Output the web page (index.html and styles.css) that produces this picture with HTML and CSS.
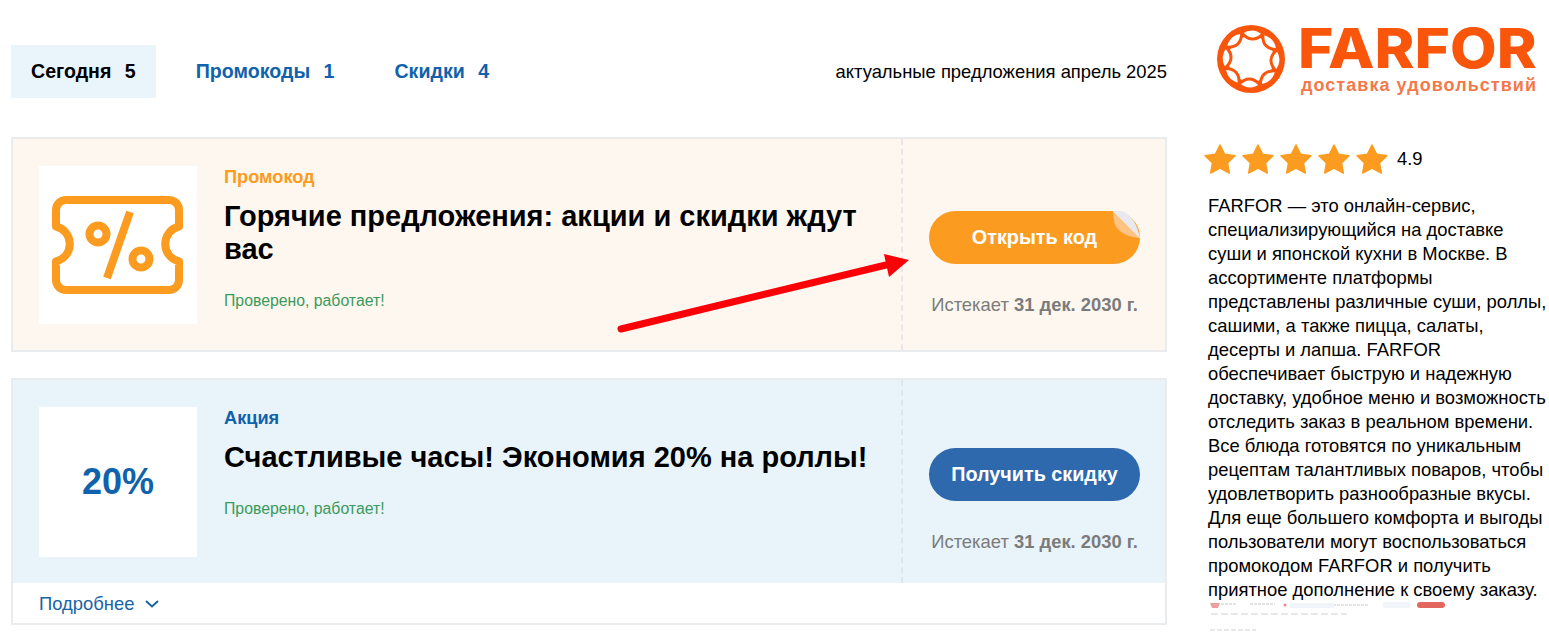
FILE: index.html
```html
<!DOCTYPE html>
<html lang="ru">
<head>
    <meta charset="UTF-8">
    <meta name="viewport" content="width=device-width, initial-scale=1.0">
    <title>Промокоды FARFOR</title>
    <link rel="stylesheet" href="styles.css">
</head>
<body>
    <div class="page">
        <main class="main">
            <!-- вкладки -->
            <nav class="tabs">
                <a class="tab active">Сегодня <span class="count">5</span></a>
                <a class="tab">Промокоды <span class="count">1</span></a>
                <a class="tab">Скидки <span class="count">4</span></a>
                <span class="tabs-note">актуальные предложения апрель 2025</span>
            </nav>

            <!-- промокод -->
            <section class="card card-promo">
                <div class="card-body">
                    <div class="thumb">
                        <svg class="ticket" viewBox="0 0 158 158" width="158" height="158">
                            <g fill="none" stroke="#fb9c21" stroke-width="8" stroke-linejoin="round">
                                <path d="M27 34H130a10 10 0 0 1 10 10V60.500A18 18 0 0 0 140 95.500V114a10 10 0 0 1-10 10H27a10 10 0 0 1-10-10V95.500A18 18 0 0 0 17 60.500V44a10 10 0 0 1 10-10z"/>
                                <path d="M91 46L68 112"/>
                                <circle cx="59" cy="68" r="8.5"/>
                                <circle cx="102" cy="93" r="8.5"/>
                            </g>
                        </svg>
                    </div>
                    <div class="info">
                        <div class="label label-orange">Промокод</div>
                        <h2 class="title">Горячие предложения: акции и скидки ждут вас</h2>
                        <div class="verified">Проверено, работает!</div>
                    </div>
                    <div class="action">
                        <a class="btn btn-orange">
                            Открыть код
                            <svg class="peel" viewBox="0 0 30 30" width="30" height="30">
                                <path d="M3 0H12Q26 6 30 27z" fill="#e7e9ef"/>
                                <path d="M3 0L30 27Q12 26 5 14Q3 6 3 0z" fill="#fcc384"/>
                                <path d="M3 0L30 27" fill="none" stroke="#fde4c6" stroke-width="1"/>
                            </svg>
                        </a>
                        <div class="expires">Истекает <b>31 дек. 2030 г.</b></div>
                    </div>
                </div>
            </section>

            <!-- акция -->
            <section class="card card-sale">
                <div class="card-body">
                    <div class="thumb thumb-sale">20%</div>
                    <div class="info">
                        <div class="label label-blue">Акция</div>
                        <h2 class="title">Счастливые часы! Экономия 20% на роллы!</h2>
                        <div class="verified">Проверено, работает!</div>
                    </div>
                    <div class="action">
                        <a class="btn btn-blue">Получить скидку</a>
                        <div class="expires">Истекает <b>31 дек. 2030 г.</b></div>
                    </div>
                </div>
                <div class="card-foot">
                    Подробнее
                    <svg viewBox="0 0 14 8" width="14" height="8"><path d="M1 1l6 5.500L13 1" fill="none" stroke="#1a64a4" stroke-width="2"/></svg>
                </div>
            </section>

            <!-- стрелка поверх карточки -->
            <svg class="arrow" viewBox="0 0 320 100" width="320" height="100">
                <path d="M21 89L286 25" stroke="#fb0007" stroke-width="7" stroke-linecap="round"/>
                <path d="M284 14L309 20L289 37z" fill="#fb0007"/>
            </svg>
        </main>

        <aside class="side">
            <div class="logo">
                <svg class="logo-ring" viewBox="0 0 72 72" width="72" height="72">
                    <defs>
                        <path id="petal" d="M25 10Q36 2 47 10Q36 22 25 10z" fill="#fff" stroke="#f9560c" stroke-width="3"/>
                    </defs>
                    <circle cx="36" cy="36" r="34" fill="#f9560c"/>
                    <circle cx="36" cy="36" r="23" fill="#fff"/>
                    <use href="#petal" transform="rotate(3 36 36)"/>
                    <use href="#petal" transform="rotate(48 36 36)"/>
                    <use href="#petal" transform="rotate(93 36 36)"/>
                    <use href="#petal" transform="rotate(138 36 36)"/>
                    <use href="#petal" transform="rotate(183 36 36)"/>
                    <use href="#petal" transform="rotate(228 36 36)"/>
                    <use href="#petal" transform="rotate(273 36 36)"/>
                    <use href="#petal" transform="rotate(318 36 36)"/>
                </svg>
                <div class="logo-text">
                    <div class="logo-name">FARFOR</div>
                    <div class="logo-sub">доставка удовольствий</div>
                </div>
            </div>
            <div class="rating">
                <svg class="star" viewBox="0 0 32 32" width="32" height="32"><path id="star" d="M16 2l4.600 9.300 10.400 1.400-7.500 7.200 1.800 10.100L16 25.200 6.700 30l1.800-10.100L1 12.700l10.400-1.400z" fill="#fb9c21" stroke="#fb9c21" stroke-width="1.500" stroke-linejoin="round"/></svg>
                <svg class="star" viewBox="0 0 32 32" width="32" height="32"><use href="#star"/></svg>
                <svg class="star" viewBox="0 0 32 32" width="32" height="32"><use href="#star"/></svg>
                <svg class="star" viewBox="0 0 32 32" width="32" height="32"><use href="#star"/></svg>
                <svg class="star" viewBox="0 0 32 32" width="32" height="32"><use href="#star"/></svg>
                <span class="rating-value">4.9</span>
            </div>
            <p class="about">FARFOR — это онлайн-сервис, специализирующийся на доставке суши и японской кухни в Москве. В ассортименте платформы представлены различные суши, роллы, сашими, а также пицца, салаты, десерты и лапша. FARFOR обеспечивает быструю и надежную доставку, удобное меню и возможность отследить заказ в реальном времени. Все блюда готовятся по уникальным рецептам талантливых поваров, чтобы удовлетворить разнообразные вкусы. Для еще большего комфорта и выгоды пользователи могут воспользоваться промокодом FARFOR и получить приятное дополнение к своему заказу.</p>
            <!-- мелкий скриншот сайта -->
            <svg class="shot" viewBox="0 0 270 32" width="270" height="32">
                <path d="M2 1h10l-2 5H4z" fill="#eba0a0"/>
                <path d="M13 2h16M42 2h25M82 2h4M125 3h35" stroke="#c9c9c9" stroke-width="1" stroke-dasharray="3 1"/>
                <circle cx="77" cy="3" r="1.500" fill="#e88"/>
                <rect x="82" y="1" width="44" height="5" fill="#f1f4f8"/>
                <rect x="175" y="0" width="27" height="6" rx="2" fill="#f1f4f8"/>
                <rect x="209" y="0" width="28" height="6" rx="3" fill="#e4675f"/>
                <path d="M3 12h136" stroke="#d2d2d2" stroke-width="1" stroke-dasharray="7 3"/>
                <path d="M2 28h46" stroke="#d2d2d2" stroke-width="1" stroke-dasharray="5 2"/>
            </svg>
        </aside>
    </div>
</body>
</html>
```

FILE: styles.css
```css
* {
    box-sizing: border-box;
    margin: 0;
    padding: 0;
}
body {
    font-family: 'Liberation Sans', Arial, sans-serif;
    color: #000;
    background-color: #fff;
    overflow: hidden;
}
.page {
    display: flex;
    align-items: flex-start;
    padding-left: 11px;
}
.main {
    position: relative;
    flex: none;
    width: 1156px;
    padding-top: 45px;
}
.tabs {
    display: flex;
    align-items: center;
    height: 53px;
    margin-bottom: 39px;
}
.tab {
    padding: 0 20px;
    margin-right: 20px;
    height: 53px;
    line-height: 53px;
    font-size: 19.6px;
    font-weight: bold;
    color: #0f62ab;
}
.tab.active {
    background-color: #e9f4fb;
    color: #000;
}
.count {
    margin-left: 8px;
}
.tabs-note {
    margin-left: auto;
    font-size: 18.4px;
}
.card {
    border: 2px solid #e9ecef;
    margin-bottom: 26px;
    background-color: #fff;
}
.card-body {
    display: flex;
}
.card-promo .card-body {
    background-color: #fef7ef;
    height: 211px;
}
.card-sale .card-body {
    background-color: #e8f3fa;
    height: 203px;
}
.thumb {
    flex: none;
    width: 158px;
    height: 158px;
    margin: 27px 0 0 26px;
    background-color: #fff;
}
.ticket {
    display: block;
}
.thumb-sale {
    height: 150px;
    line-height: 150px;
    text-align: center;
    font-size: 36px;
    font-weight: bold;
    color: #0f62ab;
}
.info {
    flex: 1;
    padding: 28px 30px 0 27px;
}
.label {
    font-size: 18.2px;
    font-weight: bold;
    line-height: 20px;
}
.label-orange {
    color: #fb9c21;
}
.label-blue {
    color: #0f62ab;
}
.title {
    margin-top: 13px;
    font-size: 29px;
    line-height: 33px;
    font-weight: bold;
}
.verified {
    margin-top: 26px;
    font-size: 15.8px;
    line-height: 18px;
    color: #3a9a5b;
}
.action {
    flex: none;
    width: 264px;
    height: 100%;
    border-left: 2px dashed #ece4e8;
    padding: 72px 0 0 26px;
}
.card-sale .action {
    border-left-color: #dde6ef;
    padding-top: 68px;
}
.btn {
    position: relative;
    display: block;
    width: 211px;
    height: 53px;
    line-height: 53px;
    border-radius: 27px;
    text-align: center;
    font-size: 19.8px;
    font-weight: bold;
    color: #fff;
}
.btn-orange {
    background-color: #fb9c21;
}
.btn-blue {
    background-color: #2e68ad;
}
.peel {
    position: absolute;
    top: 0;
    right: 0;
}
.expires {
    width: 211px;
    margin-top: 30px;
    text-align: center;
    font-size: 18.4px;
    line-height: 21px;
    white-space: nowrap;
    color: #7b7b7b;
}
.card-foot {
    display: flex;
    align-items: center;
    gap: 11px;
    height: 40px;
    padding: 2px 0 0 26px;
    font-size: 18.4px;
    color: #1a64a4;
}
.arrow {
    position: absolute;
    left: 589px;
    top: 240px;
}
.side {
    flex: none;
    width: 341px;
    margin-left: 41px;
}
.logo {
    display: flex;
    height: 100px;
    padding-top: 23px;
    margin-left: 7px;
}
.logo-ring {
    flex: none;
}
.logo-text {
    margin-left: 11px;
    color: #f9560c;
}
.logo-name {
    font-family: Inter, sans-serif;
    font-size: 55px;
    line-height: 50px;
    font-weight: 800;
    transform: scaleX(1.1);
    transform-origin: left center;
}
.logo-sub {
    margin: 3px 0 0 3px;
    font-size: 18px;
    letter-spacing: 1.05px;
    line-height: 18px;
    font-weight: bold;
    color: #f4794a;
    white-space: nowrap;
}
.rating {
    display: flex;
    align-items: center;
    gap: 6px;
    margin: 43px 0 0 -4px;
}
.rating-value {
    margin-left: 3px;
    font-size: 18.4px;
}
.about {
    margin-top: 19px;
    width: 340px;
    font-size: 18.4px;
    line-height: 24px;
}
.shot {
    display: block;
}
```
